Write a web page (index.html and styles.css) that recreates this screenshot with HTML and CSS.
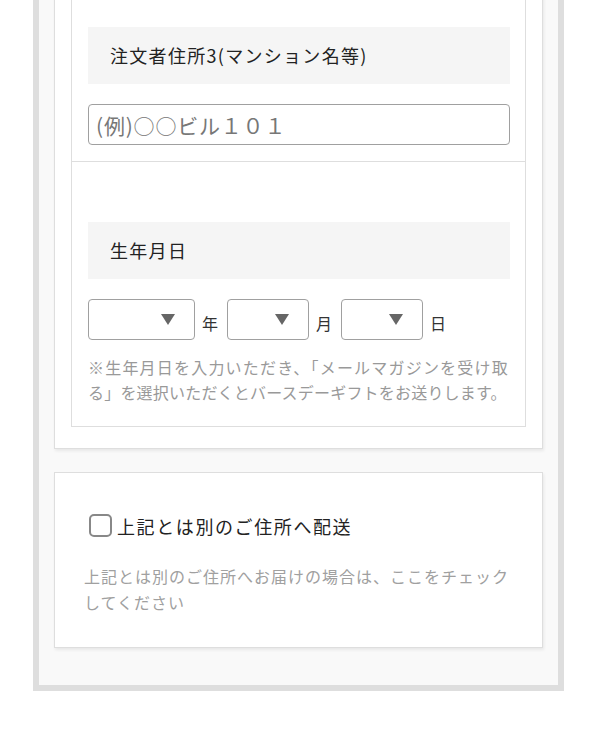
FILE: index.html
```html
<!DOCTYPE html>
<html lang="ja">

<head>
    <meta charset="UTF-8">
    <meta name="viewport" content="width=device-width, initial-scale=1.0">
    <link rel="stylesheet" href="styles.css">
    <title>ご注文者情報</title>
</head>

<body>
    <div class="frame">
        <div class="card">
            <div class="fields">
                <div class="row">
                    <div class="label">注文者住所3(マンション名等)</div>
                    <input class="text-input" type="text" placeholder="(例)○○ビル１０１">
                </div>
                <div class="row">
                    <div class="label">生年月日</div>
                    <div class="date">
                        <span class="sel sel-year"><select><option></option></select></span>
                        <span class="unit">年</span>
                        <span class="sel"><select><option></option></select></span>
                        <span class="unit">月</span>
                        <span class="sel"><select><option></option></select></span>
                        <span class="unit">日</span>
                    </div>
                    <p class="note">
                        <span class="line line-first">※生年月日を入力いただき、「メールマガジンを受け取</span>
                        <span class="line">る」を選択いただくとバースデーギフトをお送りします。</span>
                    </p>
                </div>
            </div>
        </div>

        <div class="card card-ship">
            <label class="check">
                <input type="checkbox">
                <span>上記とは別のご住所へ配送</span>
            </label>
            <p class="help">上記とは別のご住所へお届けの場合は、ここをチェックしてください</p>
        </div>
    </div>
</body>

</html>
```

FILE: styles.css
```css
body {
    margin: 0;
    background: #fff;
    font-family: "Noto Sans CJK JP", "Noto Sans", sans-serif;
    color: #333;
}

.frame {
    margin: -72px 34px 0 33px;
    border: 6px solid #dedede;
    background: #f9f9f9;
    padding: 15px 15px 37px;
}

.card {
    background: #fff;
    border: 1px solid #dedede;
    box-shadow: 1px 2px 3px rgba(0, 0, 0, 0.07);
    padding: 16px 16px 21px;
}

.card + .card {
    margin-top: 23px;
}

.fields {
    border: 1px solid #dedede;
}

.row {
    padding: 60px 15px 16px 16px;
}

.row + .row {
    border-top: 1px solid #dedede;
}

.label {
    background: #f5f5f5;
    height: 57px;
    line-height: 57px;
    padding: 0 22px;
    font-size: 18px;
    letter-spacing: 1.3px;
    color: #222;
}

.text-input {
    display: block;
    box-sizing: border-box;
    width: 100%;
    height: 41px;
    margin: 20px 0 0;
    padding: 0 7px;
    border: 1px solid #a0a0a0;
    border-radius: 4px;
    font-family: inherit;
    font-size: 21px;
    letter-spacing: 0.8px;
    outline: none;
}

.text-input::placeholder {
    color: #777;
}

.date {
    display: flex;
    align-items: center;
    margin-top: 20px;
}

.sel {
    position: relative;
    display: block;
}

.sel select {
    display: block;
    box-sizing: border-box;
    width: 82px;
    height: 41px;
    border: 1px solid #a0a0a0;
    border-radius: 4px;
    background: #fff;
    appearance: none;
    -webkit-appearance: none;
    font-family: inherit;
    font-size: 16px;
    outline: none;
}

.sel-year select {
    width: 107px;
}

.sel::after {
    content: "";
    position: absolute;
    right: 20px;
    top: 15px;
    border-left: 7px solid transparent;
    border-right: 7px solid transparent;
    border-top: 11px solid #666;
    pointer-events: none;
}

.unit {
    font-size: 16px;
    line-height: 16px;
    padding-top: 6px;
    margin: 0 9px 0 7px;
    color: #333;
}

.note {
    margin: 15px 0 5px;
    font-size: 16px;
    line-height: 25px;
    letter-spacing: 0.2px;
    color: #999;
}

.note .line {
    display: block;
    white-space: nowrap;
}

.note .line-first {
    letter-spacing: 1.2px;
}

.card-ship {
    padding: 39px 29px 32px;
}

.check {
    display: flex;
    align-items: center;
    height: 27px;
    font-size: 18px;
    letter-spacing: 1.6px;
    color: #222;
}

.check input {
    appearance: none;
    -webkit-appearance: none;
    box-sizing: border-box;
    width: 23px;
    height: 23px;
    margin: 0 5px 0 5px;
    border: 2px solid #888;
    border-radius: 5px;
    background: #fff;
}

.help {
    margin: 24px 0 0;
    font-size: 16px;
    line-height: 26px;
    letter-spacing: 1px;
    color: #a0a0a0;
}
```
